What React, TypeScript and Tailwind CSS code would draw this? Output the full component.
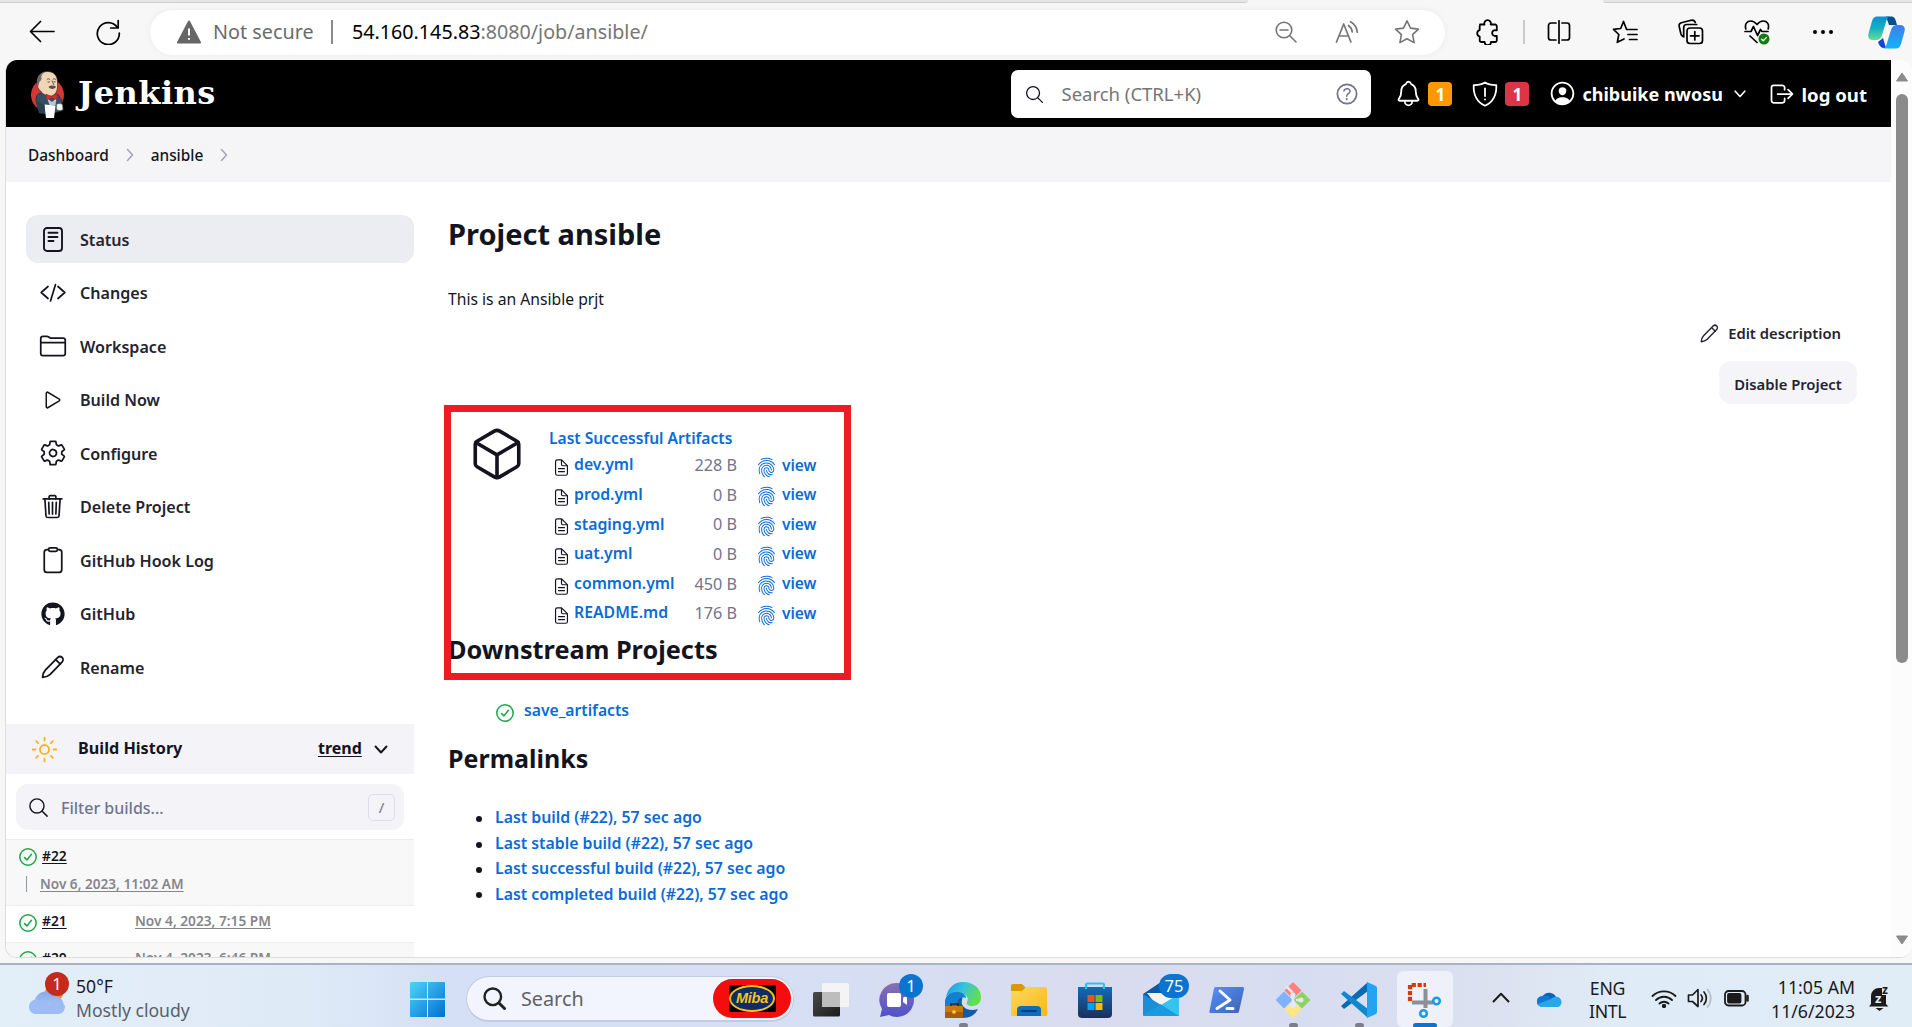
import type { ReactNode } from "react";
import {
  IoSearchOutline, IoHelpCircleOutline, IoNotificationsOutline, IoPersonCircleOutline, IoLogOutOutline,
  IoFolderOutline, IoPlayOutline, IoSettingsOutline, IoTrashOutline, IoClipboardOutline,
  IoSunnyOutline, IoCubeOutline, IoDocumentTextOutline, IoFingerPrintOutline,
} from "react-icons/io5";
import { FaGithub } from "react-icons/fa";

const Line = ({ w, h, sw = 1.6, vb, children, className = "" }: { w: number; h: number; sw?: number; vb?: string; children: ReactNode; className?: string }) => (
  <svg width={w} height={h} viewBox={vb ?? `0 0 ${w} ${h}`} fill="none" stroke="currentColor" strokeWidth={sw} strokeLinecap="round" strokeLinejoin="round" className={`shrink-0 ${className}`}>
    {children}
  </svg>
);

const Pencil = ({ size }: { size: number }) => (
  <Line w={size} h={size} vb="0 0 24 24" sw={1.8}>
    <path d="M1.6 22.4C1.8 19 2.6 16.8 4.5 14.8L16.6 2.6c1.4-1.4 3.3-1.3 4.5-.1s1.3 3.2-.1 4.6L9.2 19.3C7.2 21.2 5 22.1 1.6 22.4Z" />
    <path d="M14.8 4.6l4.500 4.500" />
  </Line>
);

const Ok = () => (
  <Line w={18} h={18} sw={1.5} className="text-[#1ea64b]">
    <circle cx="9" cy="9" r="8.2" />
    <path d="M5.600 9.600l2.300 2.300 4.600-5.600" />
  </Line>
);

const Chevron = ({ className = "" }: { className?: string }) => (
  <Line w={8} h={14} sw={1.5} className={className}><path d="M1.500 1.500L6.500 7l-5 5.500" /></Line>
);

function Toolbar() {
  return (
    <div className="shrink-0 bg-[#f7f7f7]">
      <div className="flex h-[3px] justify-between">
        <div className="w-[1248px] rounded-br border-b border-[#cfcfcf] bg-[#e6e6e6]" />
        <div className="w-[309px] rounded-bl border-b border-[#cfcfcf] bg-[#e6e6e6]" />
      </div>
      <div className="flex h-[57px] items-center pb-[1px] pt-[2px] text-black">
        <Line w={26} h={24} sw={1.7} className="ml-[29px]"><path d="M25 11.500H1.500M11.500 1.500l-10 10 10 10" /></Line>
        <Line w={26} h={26} sw={1.7} className="ml-[40px]"><path d="M22.500 8.500A11 11 0 1 0 24.300 14M23.200 1.500v7.500h-7.500" /></Line>
        <div className="ml-[29px] mt-[1px] flex h-[45px] w-[1295px] items-center rounded-full bg-white pb-[2px] pl-[26px] shadow-[0_0_6px_rgba(0,0,0,0.06)]">
          <svg width="26" height="24" viewBox="0 0 26 24" className="shrink-0"><path d="M13 1.500L24 22.500H2z" fill="#666" stroke="#666" strokeWidth="2" strokeLinejoin="round" /><path d="M13 8.500v7M13 18v1.800" stroke="#fff" strokeWidth="2" /></svg>
          <span className="ml-[11px] w-[118px] text-[19.8px] text-[#6b6b6b]">Not secure</span>
          <span className="h-[24px] w-[2px] bg-[#8c8c8c]" />
          <span className="ml-[19px] flex-1 whitespace-nowrap text-[19.7px] text-[#767676]"><span className="text-black">54.160.145.83</span>:8080/job/ansible/</span>
          <div className="flex items-center pr-[25px] text-[#757575]">
            <Line w={22} h={22} sw={1.6}><circle cx="9" cy="9" r="7.8" /><path d="M5 9h8M14.800 14.800l6.200 6.200" /></Line>
            <Line w={24} h={24} sw={1.7} className="ml-[38px]"><path d="M1.500 22L8.700 4l7.200 18M4 16h9.500M13.500 5.500a9 9 0 0 1 3.700 6.500M15.500 1.800a13 13 0 0 1 6.700 10.500" /></Line>
            <Line w={26} h={26} sw={1.6} className="ml-[35px]"><path d="M13 1.800l3.500 7.300 7.900 1-5.800 5.500 1.500 8-7.100-3.900-7.100 3.900 1.500-8L1.600 10.100l7.900-1z" /></Line>
          </div>
        </div>
        <Line w={24} h={26} sw={1.8} className="ml-[30px]"><path d="M5 5.500h4.500a3.300 3.300 0 1 1 6.200 0H20a1.800 1.800 0 0 1 1.800 1.800v4h-1a2.900 2.900 0 1 0 0 5.600h1v4.400A1.800 1.800 0 0 1 20 23h-4a3.200 3.200 0 0 1-6.400 0H6.500a1.800 1.800 0 0 1-1.800-1.800v-3.700a3.300 3.300 0 0 1 0-6.400V7" /></Line>
        <span className="ml-[24px] h-[24px] w-[2px] bg-[#c9c9c9]" />
        <Line w={24} h={24} sw={1.7} className="ml-[22px]"><path d="M9 3H4a2.500 2.500 0 0 0-2.500 2.500v12A2.500 2.500 0 0 0 4 20h5M12 .8v22.400M15 3h5a2.500 2.500 0 0 1 2.500 2.500v12A2.500 2.500 0 0 1 20 20h-5" /></Line>
        <Line w={26} h={24} sw={1.7} className="ml-[41px]"><path d="M16 9.500l-1.500-.2L11.500 1.500 8.700 8.500l-7.200.8 5.300 5.200-1.500 7.800L12 19M17 9.500h8M16 14.500h9M17.500 19.500h7.500" /></Line>
        <Line w={26} h={26} sw={1.7} className="ml-[40px]"><rect x="9" y="9" width="15.5" height="15.5" rx="3" /><path d="M16.800 12.500v8.500M12.500 16.800H21M5 17.500C3.800 17 3.200 16 2.800 14.500L1.200 7.500c-.4-2 .4-3.200 2.200-3.700L13 1.300c2.300-.5 3.700.4 4.300 2.200M5.700 18V8.500c0-2 1-3 3-3h10" /></Line>
        <svg width="26" height="26" viewBox="0 0 26 26" fill="none" stroke="#000" strokeWidth="1.7" strokeLinecap="round" strokeLinejoin="round" className="ml-[40px] shrink-0"><path d="M1.800 10C.5 5 3 2 6.800 2c2.700 0 4.600 1.500 6.200 3.500C14.600 3.500 16.500 2 19.200 2 23 2 25.500 5 24.200 10M1 12.500h6l2.500-5 4 9 3-6 1.500 2h6M6 17l7 6.500" /><circle cx="20" cy="20" r="5.5" fill="#107c10" stroke="none" /><path d="M17.600 20.200l1.700 1.600 3-3.200" stroke="#fff" strokeWidth="1.3" /></svg>
        <span className="ml-[43px] flex gap-[4px]"><i className="size-[4px] rounded-full bg-black" /><i className="size-[4px] rounded-full bg-black" /><i className="size-[4px] rounded-full bg-black" /></span>
        <svg width="37" height="33" viewBox="0 0 37 33" className="ml-[35px] shrink-0">
          <defs>
            <linearGradient id="cpa" x1="0" y1="0" x2="0" y2="1"><stop offset="0" stopColor="#0d8fd0" /><stop offset=".5" stopColor="#14b1c4" /><stop offset="1" stopColor="#67dd92" /></linearGradient>
            <linearGradient id="cpb" x1="0" y1="0" x2="0" y2="1"><stop offset="0" stopColor="#3f7fe8" /><stop offset="1" stopColor="#12b2ff" /></linearGradient>
          </defs>
          <path d="M18 .5h5c3 0 4 1.500 5 5l1 3.500h-8z" fill="#0b4f8a" />
          <path d="M10 26l5-4 3 10h-2c-3 0-4.500-2-6-6z" fill="#1743d6" />
          <path d="M9 .5h14c-3 0-4 2-5 5.500l-4 13c-1 3.500-3 5-6 5H5c-4 0-5.500-2.500-4.500-6.500L4 5C5 2 6.500.5 9 .5z" fill="url(#cpa)" />
          <path d="M28 32.500H14c3 0 4-2 5-5.500l4-13c1-3.500 3-5 6-5h3c4 0 5.500 2.500 4.500 6.500L33 28c-1 3-2.500 4.500-5 4.500z" fill="url(#cpb)" />
        </svg>
      </div>
    </div>
  );
}

function Butler() {
  return (
    <svg width="37" height="50" viewBox="0 0 37 50" className="shrink-0">
      <ellipse cx="18.5" cy="26" rx="16.5" ry="16.5" fill="#d33833" />
      <path d="M11 24c-3 1-4.500 4-4 8l3 12 9 1.500 15-4-1-10-4-6-7-2z" fill="#335061" stroke="#1b2a33" strokeWidth=".6" />
      <path d="M8 14C8 6 13 2.500 18.500 2.500c6.500 0 10 4 10 11C29 20 28 25 23 27c-5 .8-9-1.500-11.500-5C9 20 8 17 8 14z" fill="#f0d6b7" stroke="#2c2624" strokeWidth=".7" />
      <path d="M9 18C6.500 12 8.500 4 17 2.500c-4 2-5 4-4.500 7 .2 2-2 2-2.500 5z" fill="#6d6b6d" />
      <path d="M18 10.500c.8-1 2-1 2.800 0M24 10.300c.7-.8 1.800-.8 2.500 0M23 12l1.800 3.500M19 13h1.500M25 12.800h1.300" stroke="#3a2c28" strokeWidth=".8" fill="none" strokeLinecap="round" />
      <path d="M19.500 18c2-1.800 5.500-1.800 7.500-.2-1 2.500-5.500 3-7.500.2z" fill="#57504f" />
      <path d="M18 29l5 4 4.500-4-1 7h-6z" fill="#b7c7d8" />
      <path d="M17 25l5.500 2.500 5.500-3v6l-5.500-1.500-5 2z" fill="#e02b2b" stroke="#81272b" strokeWidth=".5" />
      <path d="M15.500 35.500l11 1-1.500 12.500h-8z" fill="#fff" />
      <path d="M8 32l7.500 4v8l-5-1z" fill="#29404e" />
      <path d="M27.500 35.500c2-1.500 5-1.500 6 .5l.5 4.500c-2.500 1.500-5 1.500-6.500-.5z" fill="#f1f1f1" stroke="#555" strokeWidth=".6" />
    </svg>
  );
}

const Badge = ({ className, children }: { className: string; children: ReactNode }) => (
  <span className={`flex h-[24px] w-[24px] items-center justify-center rounded-[4px] pt-[1px] text-[17px] font-bold ${className}`}>{children}</span>
);

function Header() {
  return (
    <header className="flex h-[67px] shrink-0 items-center bg-black pl-[23px] text-white">
      <Butler />
      <span className="ml-[12px] -mt-[2px] flex-1 font-['DejaVu_Serif'] text-[32px] font-bold tracking-[0.5px]">Jenkins</span>
      <div className="mt-[1px] flex h-[48px] w-[360px] items-center rounded-[7px] bg-white pl-[13px] text-[#14141f]">
        <IoSearchOutline size={21} />
        <span className="ml-[16px] flex-1 text-[18.5px] text-[#757575]">Search (CTRL+K)</span>
        <IoHelpCircleOutline size={28} className="mr-[10px] text-[#73738c]" />
      </div>
      <IoNotificationsOutline size={29} className="ml-[23px] shrink-0" />
      <Badge className="ml-[5px] mt-[1px] bg-[#ff9800]">1</Badge>
      <Line w={26} h={26} sw={1.8} className="ml-[20px]"><path d="M13 1.500c3 2 7 2.700 11.300 2.600.5 11-3.300 17-11.300 20.700C5 21.100 1.200 15.100 1.700 4.100 6 4.200 10 3.500 13 1.500zM13 7.500v7.500M13 18.300v.2" /></Line>
      <Badge className="ml-[7px] mt-[1px] bg-[#dc3545]">1</Badge>
      <IoPersonCircleOutline size={29} className="ml-[19px] shrink-0" />
      <span className="ml-[5px] mt-[2px] w-[152px] whitespace-nowrap text-[18px] font-bold">chibuike nwosu</span>
      <Line w={12} h={8} sw={1.6}><path d="M1.200 1.200L6 6.500l4.800-5.300" /></Line>
      <IoLogOutOutline size={28} className="ml-[22px] shrink-0" />
      <span className="ml-[5px] mr-[24px] mt-[2px] whitespace-nowrap text-[18.6px] font-bold">log out</span>
    </header>
  );
}

const tasks: [string, ReactNode][] = [
  ["Status", <Line w={20} h={25} sw={1.9}><rect x="1" y="1" width="18" height="23" rx="3" /><path d="M5.500 5.800h9M5.500 10h9M5.500 14h5" /></Line>],
  ["Changes", <Line w={26} h={20} sw={1.7}><path d="M8 3.500L1.200 9.500 8 15.500M18 3.500l6.800 6-6.800 6M15.500 1.500l-5 16.500" /></Line>],
  ["Workspace", <IoFolderOutline size={28} />],
  ["Build Now", <IoPlayOutline size={24} />],
  ["Configure", <IoSettingsOutline size={28} />],
  ["Delete Project", <IoTrashOutline size={27} />],
  ["GitHub Hook Log", <IoClipboardOutline size={28} />],
  ["GitHub", <FaGithub size={24} />],
  ["Rename", <Pencil size={24} />],
];

function Sidebar() {
  return (
    <aside className="w-[408px] shrink-0 text-[#14141f]">
      <nav className="flex flex-col gap-[5.5px] pt-[33px]">
        {tasks.map(([label, icon], i) => (
          <div key={label} className={`ml-[20px] flex h-[48px] items-center rounded-xl pl-[12px] ${i === 0 ? "bg-[#ecedf3]" : ""}`}>
            <span className="mr-[13px] flex w-[29px] justify-center">{icon}</span>
            <span className="mt-[2px] text-[16.1px] font-semibold text-[#24242f]">{label}</span>
          </div>
        ))}
      </nav>
      <div className="mt-[33px] flex h-[50px] items-center bg-[#f3f3f8] pl-[24px]">
        <IoSunnyOutline size={29} className="text-[#ffb01f]" />
        <span className="-mt-[2px] ml-[19px] w-[240px] text-[16.2px] font-bold">Build History</span>
        <span className="-mt-[2px] text-[16px] font-bold underline underline-offset-2">trend</span>
        <Line w={14} h={9} sw={1.9} className="ml-[12px]"><path d="M1.500 1.500L7 7.500l5.500-6" /></Line>
      </div>
      <div className="ml-[10px] mt-[10px] flex h-[46px] w-[388px] items-center rounded-xl bg-[#f3f3f8] pl-[11px]">
        <IoSearchOutline size={23} />
        <span className="ml-[11px] mt-[1px] flex-1 text-[16px] font-medium text-[#73738c]">Filter builds...</span>
        <span className="mr-[9px] flex size-[27px] items-center justify-center rounded-[5px] border border-[#dedee8] text-[15px] text-[#73738c]">/</span>
      </div>
      <div className="mt-[9px] h-[66px] border-t border-[#ececec] bg-[#f8f8f8] text-[13.8px] font-semibold">
        <div className="flex h-[34px] items-center pl-[13px]">
          <Ok /><span className="ml-[5px] -mt-[2px] underline underline-offset-2">#22</span>
        </div>
        <div className="flex h-[20px] items-center pl-[20px]">
          <span className="h-[16px] w-[1px] bg-[#8a98a5]" />
          <span className="ml-[13px] text-[13.6px] text-[#85858a] underline underline-offset-2">Nov 6, 2023, 11:02 AM</span>
        </div>
      </div>
      {[["#21", "Nov 4, 2023, 7:15 PM", "bg-white"], ["#20", "Nov 4, 2023, 6:46 PM", "bg-[#f8f8f8]"]].map(([n, d, bg]) => (
        <div key={n} className={`flex h-[37px] items-center border-t border-[#ececec] pl-[13px] text-[13.8px] font-semibold ${bg}`}>
          <span className="-mt-[2px]"><Ok /></span><span className="ml-[5px] -mt-[6px] w-[93px] underline underline-offset-2">{n}</span>
          <span className="-mt-[6px] text-[13.7px] text-[#85858a] underline underline-offset-2">{d}</span>
        </div>
      ))}
    </aside>
  );
}

const files = [["dev.yml", "228 B"], ["prod.yml", "0 B"], ["staging.yml", "0 B"], ["uat.yml", "0 B"], ["common.yml", "450 B"], ["README.md", "176 B"]];
const links = ["Last build", "Last stable build", "Last successful build", "Last completed build"];

function Main() {
  return (
    <main className="flex-1 pl-[34px] text-[#14141f]">
      <h1 className="mt-[32px] h-[40px] text-[29px] font-bold leading-[40px]">Project ansible</h1>
      <p className="mt-[33px] h-[24px] text-[15.7px] leading-6">This is an Ansible prjt</p>
      <div className="mt-[10px] flex h-[24px] items-center justify-end gap-[9px] pr-[50px] text-[14.8px] font-semibold text-[#24242f]">
        <Pencil size={19} />Edit description
      </div>
      <div className="mt-[16px] flex justify-end pr-[34px]">
        <button className="h-[43px] w-[138px] rounded-xl bg-[#f5f5f9] pt-[3px] text-[14.8px] font-semibold text-[#24242f]">Disable Project</button>
      </div>
      <div className="relative mt-[22px]">
        <div className="flex">
          <IoCubeOutline size={58} className="ml-[20px] -mt-[1px] shrink-0" />
          <div className="ml-[23px]">
            <div className="h-[24px] text-[15.6px] font-semibold leading-6 text-[#0b6bd6]">Last Successful Artifacts</div>
            {files.map(([f, s]) => (
              <div key={f} className="flex h-[29.6px] items-center text-[15.8px] font-semibold text-[#0b6bd6]">
                <IoDocumentTextOutline size={19} className="ml-[3px] mt-[6px] text-[#14141f]" />
                <span className="ml-[3px] mt-[1px] w-[99px]">{f}</span>
                <span className="mt-[1px] w-[64px] text-right text-[16.2px] font-normal text-[#73738c]">{s}</span>
                <IoFingerPrintOutline size={21} className="ml-[19px] mt-[5px]" />
                <span className="ml-[5px] mt-[1px] text-[15.5px]">view</span>
              </div>
            ))}
          </div>
        </div>
        <h2 className="mt-[3px] h-[36px] text-[25.3px] font-bold leading-9">Downstream Projects</h2>
        <div className="absolute -left-[4px] -top-[21px] h-[275px] w-[407px] border-[7px] border-[#ed1c24]" />
      </div>
      <div className="mt-[32px] flex h-[24px] items-center pl-[48px] text-[15.8px] font-semibold text-[#0b6bd6]">
        <span className="mt-[5px]"><Ok /></span><span className="ml-[10px] mt-[1px] text-[15.7px]">save_artifacts</span>
      </div>
      <h2 className="mt-[17px] h-[36px] text-[25px] font-bold leading-9">Permalinks</h2>
      <ul className="mt-[30px]">
        {links.map((l) => (
          <li key={l} className="flex h-[25.4px] items-center pl-[28px] text-[15.85px] font-semibold text-[#0b6bd6]">
            <i className="mt-[2px] size-[6px] rounded-full bg-[#14141f]" /><span className="ml-[13px]">{l} (#22), 57 sec ago</span>
          </li>
        ))}
      </ul>
    </main>
  );
}

function Scrollbar() {
  return (
    <div className="flex w-[21px] flex-col items-center bg-[#fcfcfc] pb-[12px] pt-[12px]">
      <svg width="14" height="10" viewBox="0 0 14 10"><path d="M7 1l5.500 8H1.500z" fill="#8b8b8b" stroke="#8b8b8b" strokeLinejoin="round" /></svg>
      <div className="mt-[12px] h-[569px] w-[12px] rounded-full bg-[#8b8b8b]" />
      <svg width="14" height="10" viewBox="0 0 14 10" className="mt-auto"><path d="M7 9l5.500-8H1.500z" fill="#8b8b8b" stroke="#8b8b8b" strokeLinejoin="round" /></svg>
    </div>
  );
}

const apps: { id: string; art: ReactNode; badge?: string; mark?: "dot" | "active" }[] = [
  { id: "taskview", art: <><defs><linearGradient id="tv" x1="0" y1="0" x2="1" y2="1"><stop offset="0" stopColor="#4a4a4a" /><stop offset="1" stopColor="#1c1c1c" /></linearGradient></defs><rect x="0" y="10" width="27" height="24.5" rx="1.5" fill="url(#tv)" /><rect x="9" y="1" width="27" height="24" rx="1.5" fill="#f4f4f4" /><rect x="9" y="10" width="18" height="15" fill="#bdbdbd" /></> },
  { id: "chat", badge: "1", art: <><defs><linearGradient id="ch" x1="0" y1="0" x2="0" y2="1"><stop offset="0" stopColor="#8a6fae" /><stop offset="1" stopColor="#4f52cc" /></linearGradient></defs><path d="M18 1a17 17 0 1 1-8 32L1 35l2-8A17 17 0 0 1 18 1z" fill="url(#ch)" /><rect x="8" y="11" width="14" height="14" rx="2" fill="#fff" /><path d="M24 16l4-3v10l-4-3z" fill="#fff" /></> },
  { id: "edge", mark: "dot", art: <><defs><linearGradient id="eg" x1="0" y1="0" x2="1" y2=".4"><stop offset="0" stopColor="#1c98dd" /><stop offset=".5" stopColor="#35c1e0" /><stop offset="1" stopColor="#62e04c" /></linearGradient></defs><path d="M0 21c0-8 7-12 13-11 5 1 5 5 4 8-2 7 6 12 16 9-3 6-8 9-15 9C8 36 0 30 0 21z" fill="#0f5cae" /><path d="M1 15C3 6 9 0 18 0c11 0 18 7 18 15 0 6-4 9-9 9-4 0-6-2-5-4 2-3 0-8-6-9-6-1.500-11 0-15 4z" fill="url(#eg)" /><path d="M0 22C0 14 6 9.500 13 10c5 .5 8 3 8 6-5-2.500-9 1-9 8H0z" fill="#147fd0" /><path d="M6 24v-2h7v2" fill="none" stroke="#3a2206" strokeWidth="1.5" /><rect x="0" y="24" width="18" height="12" rx="1" fill="#c87a0c" /><rect x="0" y="30" width="18" height="6" fill="#a85c06" /><rect x="7.5" y="28.5" width="3" height="3" fill="#ffd94a" /></> },
  { id: "files", art: <><defs><linearGradient id="fo" x1="0" y1="0" x2="1" y2="1"><stop offset="0" stopColor="#ffd95c" /><stop offset="1" stopColor="#f8b61c" /></linearGradient></defs><path d="M0 4a2 2 0 0 1 2-2h9l4 4h18v8H0z" fill="#d99a06" /><path d="M0 9h11l4-4h19a2 2 0 0 1 2 2v27H0z" fill="url(#fo)" /><path d="M6 34v-6a4 4 0 0 1 4-4h16a4 4 0 0 1 4 4v6z" fill="#0f6cbd" /><path d="M11 29h14" stroke="#083f7a" strokeWidth="1.8" strokeLinecap="round" /></> },
  { id: "store", art: <><defs><linearGradient id="st" x1="0" y1="0" x2="0" y2="1"><stop offset="0" stopColor="#0f6cbd" /><stop offset="1" stopColor="#1c2f59" /></linearGradient></defs><path d="M9 7V3a1.500 1.500 0 0 1 1.500-1.500h15A1.500 1.500 0 0 1 27 3v4" fill="none" stroke="#30c0f0" strokeWidth="2.2" /><path d="M1 5h34v27a4 4 0 0 1-4 4H5a4 4 0 0 1-4-4z" fill="url(#st)" /><path d="M9 7V4M27 7V4" stroke="#30c0f0" strokeWidth="2.2" /><path d="M10.500 13h7v7h-7z" fill="#f25022" /><path d="M18.500 13h7v7h-7z" fill="#7fba00" /><path d="M10.500 21h7v7h-7z" fill="#00a4ef" /><path d="M18.500 21h7v7h-7z" fill="#ffb900" /></> },
  { id: "mail", badge: "75", art: <><path d="M0 12L18 0l18 12v8H0z" fill="#0c59a4" /><path d="M4 11h28v12l-14 6z" fill="#f3f3f3" /><path d="M0 12l18 11-18 11z" fill="#1a8fd8" /><path d="M36 12L0 34h36z" fill="#35c3f0" /><path d="M0 34l17-12 19 12z" fill="#1c9ae0" /></> },
  { id: "powershell", art: <><defs><linearGradient id="ps" x1="0" y1="0" x2="1" y2="1"><stop offset="0" stopColor="#5391fe" /><stop offset="1" stopColor="#3e62ad" /></linearGradient></defs><path d="M6.500 5h27a1.500 1.500 0 0 1 1.500 2l-5 22.500a2 2 0 0 1-2 1.500H2a1.500 1.500 0 0 1-1.500-2l4.500-22.500A2 2 0 0 1 6.500 5z" fill="url(#ps)" /><path d="M11 9l10 9-13 8.500M18 26.500h6" fill="none" stroke="#fff" strokeWidth="3" strokeLinecap="round" strokeLinejoin="round" /></> },
  { id: "git", mark: "dot", art: <><path d="M18 0l8.500 8.500-8.500 8.500-8.500-8.500z" fill="#ff8080" /><path d="M9 9.500l8.500 8.500L9 26.500.5 18z" fill="#80b3ff" /><path d="M27 9.500l8.500 8.500-8.500 8.500-8.500-8.500z" fill="#8cd35f" /><path d="M18 19l8.500 8.500L18 36l-8.500-8.500z" fill="#ffe680" /><path d="M12 5l5 5v5M18 16v5M22 18h4" stroke="#e6e8f4" strokeWidth="2.5" fill="none" strokeLinecap="round" /><circle cx="18" cy="13" r="2.5" fill="#e6e8f4" /><circle cx="18" cy="23" r="3" fill="#e6e8f4" /><circle cx="26" cy="18" r="2.5" fill="#e6e8f4" /></> },
  { id: "code", mark: "dot", art: <><path d="M0 24l3 3L27 9V0z" fill="#0a6ab0" /><path d="M0 12l3-3 24 18v9z" fill="#1088cf" /><path d="M26 0l8 3.500a3 3 0 0 1 2 2.500v24a3 3 0 0 1-2 2.500L26 36z" fill="#24a4f0" /></> },
  { id: "snip", mark: "active", art: <><path d="M3 19V3h16" fill="none" stroke="#d83b01" strokeWidth="4.2" strokeDasharray="4.2 1.7" /><path d="M5 20.500h21M18.500 7v19" stroke="#8a9097" strokeWidth="4" /><circle cx="29.5" cy="19" r="3.3" fill="none" stroke="#1a9be6" strokeWidth="2.6" /><circle cx="16.5" cy="31.5" r="3.3" fill="none" stroke="#1a9be6" strokeWidth="2.6" /></> },
];

function Taskbar() {
  return (
    <div className="flex h-[64px] shrink-0 overflow-hidden border-t-2 border-[#abb3c0] bg-[linear-gradient(90deg,#e2eef8_0%,#dfeaf7_16%,#d5e0f6_23%,#d6def3_45%,#d9dcee_58%,#d7ddf0_68%,#dce1f0_78%,#dfebf6_84%,#e0edf7_100%)] text-[#1b1b1b]">
      <div className="flex w-[410px] pl-[28px] pt-[4px]">
        <div className="relative h-[48px] w-[38px]">
          <svg width="38" height="48" viewBox="0 0 38 48">
            <defs><linearGradient id="wc" x1="0" y1="0" x2="0" y2="1"><stop offset="0" stopColor="#86a9ea" /><stop offset="1" stopColor="#bcd3fa" /></linearGradient></defs>
            <circle cx="26" cy="24" r="9" fill="#f08a1c" />
            <path d="M8 45a7.500 7.500 0 0 1-1-14.500A12 12 0 0 1 28 27a9.500 9.500 0 0 1 2 18z" fill="url(#wc)" />
            <path d="M1 38a7 7 0 0 1 12-5c3-2 7 0 8 4a9 9 0 0 1 16 0c0 5-3 8-7 8H8c-4 0-7-3-7-7z" fill="#9cbcf3" />
          </svg>
          <span className="absolute left-[17px] top-[3px] flex size-[24px] items-center justify-center rounded-full bg-[#c42b1c] text-[16.5px] text-white">1</span>
        </div>
        <div className="ml-[10px] mt-[5px] text-[17.6px] leading-6">
          <div>50°F</div>
          <div className="text-[#5a5f66]">Mostly cloudy</div>
        </div>
      </div>
      <svg width="35" height="35" viewBox="0 0 35 35" className="mt-[17px] shrink-0">
        <defs><linearGradient id="wn" x1="0" y1="0" x2="1" y2="1"><stop offset="0" stopColor="#4fd3fb" /><stop offset="1" stopColor="#0070d0" /></linearGradient></defs>
        <path d="M1 0h16v16.500H0V1a1 1 0 0 1 1-1zM18 0h16a1 1 0 0 1 1 1v15.500H18zM0 18h17v17H1a1 1 0 0 1-1-1zM18 18h17v16a1 1 0 0 1-1 1H18z" fill="url(#wn)" />
      </svg>
      <div className="ml-[21px] mt-[11px] flex h-[46px] w-[328px] items-center rounded-full border border-b-2 border-[#c2cce0] bg-[#f2f5fd] pl-[16px]">
        <Line w={23} h={23} sw={2.4} className="text-[#222]"><circle cx="9.8" cy="9.8" r="8.3" /><path d="M16 16l5.500 5.500" strokeWidth="3" /></Line>
        <span className="ml-[15px] mt-[1px] flex-1 text-[19.8px] text-[#5f6166]">Search</span>
        <span className="mr-[2px] flex h-[39px] w-[78px] items-center justify-center rounded-full bg-[#f40d0d]">
          <span className="flex h-[27px] w-[47px] items-center justify-center bg-black">
            <span className="flex h-[27px] w-[46px] items-center justify-center rounded-[50%] border-[2.5px] border-[#f7c21b] bg-[#0c2c6a] font-['Liberation_Sans'] text-[14.5px] font-bold italic tracking-[-0.2px] text-[#f7c21b]">Miba</span>
          </span>
        </span>
      </div>
      <div className="ml-[4px] flex">
        {apps.map((a) => (
          <div key={a.id} className="flex w-[66px] justify-center pt-[6px]">
            <div className={`relative h-[56px] w-[56px] ${a.mark === "active" ? "rounded-md bg-[#eef1fa]" : ""}`}>
              <svg width="36" height="36" viewBox="0 0 36 36" className="ml-[10px] mt-[10.5px]">{a.art}</svg>
              {a.badge && <span className={`absolute top-[3px] flex h-[24px] items-center justify-center rounded-full bg-[#0a74d1] text-[16.5px] text-white ${a.badge.length > 1 ? "left-[26px] w-[30px]" : "left-[30px] w-[24px]"}`}>{a.badge}</span>}
              {a.mark === "dot" && <span className="absolute left-[24px] top-[52px] h-[5px] w-[9px] rounded-full bg-[#7c7f8b]" />}
              {a.mark === "active" && <span className="absolute left-[16px] top-[52px] h-[5px] w-[24px] rounded-full bg-[#0a74d1]" />}
            </div>
          </div>
        ))}
      </div>
      <div className="ml-[34px] flex flex-1 items-center pt-[4px]">
        <Line w={18} h={11} sw={2} className="-mt-[1px]"><path d="M1.500 9.500L9 1.800l7.500 7.700" /></Line>
        <svg width="25" height="17" viewBox="0 0 25 17" className="ml-[27px] mt-[2px] shrink-0"><path d="M6 5a7.500 7.500 0 0 1 13 1l-7 5z" fill="#0364b8" /><path d="M5.500 16A5.500 5.500 0 0 1 5 5c5-1.500 8 1 10 4z" fill="#0f78d4" /><path d="M14 8c2-3 10-4 10.500 3 0 3-2 5-4.500 5H5.500c-2 0-3.500-1-4.500-3z" fill="#28a8ea" /></svg>
        <div className="ml-[27px] mt-[4px] w-[37px] text-center text-[17.7px] leading-[23px] tracking-[-0.3px]">ENG<br />INTL</div>
        <Line w={26} h={19} sw={1.9} className="ml-[25px]"><path d="M1.500 7a16.500 16.500 0 0 1 23 0M5 11a11.500 11.500 0 0 1 16 0M8.500 14.500a6.500 6.500 0 0 1 9 0" /><circle cx="13" cy="17" r="1.2" fill="currentColor" /></Line>
        <Line w={26} h={20} sw={1.7} className="ml-[10px]"><path d="M1.500 7v6.500h4L11 18.500v-17L5.500 7zM14 7a5 5 0 0 1 0 6.500M17 4a9.500 9.500 0 0 1 0 12.500" /><path d="M20.500 1.500a13.500 13.500 0 0 1 0 17.500" stroke="#b5bdc8" /></Line>
        <Line w={26} h={17} sw={1.8} className="ml-[11px]"><rect x="1" y="1" width="20.5" height="14.5" rx="3.5" /><rect x="4" y="4" width="12.5" height="8.5" rx="1" fill="currentColor" /><path d="M23.500 6v4.500" strokeWidth="2.5" /></Line>
        <div className="ml-auto mt-[2px] text-right text-[17.7px] leading-6"><div>11:05 AM</div><div>11/6/2023</div></div>
        <div className="relative ml-[14px] mr-[22px] mt-[2px] h-[26px] w-[21px]">
          <svg width="21" height="26" viewBox="0 0 21 26"><path d="M2 18V10a8 8 0 0 1 8-8h7v16l2.500 2.500H0z" fill="#1b1b1b" /><path d="M6.500 22h8l-4 3z" fill="#1b1b1b" /></svg>
          <span className="absolute left-[6px] top-[5px] text-[13px] font-bold leading-[14px] text-[#e0edf7]">z</span>
          <span className="absolute left-[13px] top-0 h-[9px] bg-[#e0edf7] text-[12px] font-bold leading-[8px]">z</span>
        </div>
      </div>
    </div>
  );
}

export default function App() {
  return (
    <div className="flex h-[1027px] w-[1912px] flex-col overflow-hidden bg-[#f7f7f7] font-['Noto_Sans',sans-serif]">
      <Toolbar />
      <div className="ml-[5px] flex h-[898px] shrink-0 overflow-hidden rounded-[12px] border-b border-l border-[#dedede] bg-white">
        <div className="flex min-w-0 flex-1 flex-col">
          <Header />
          <div className="flex h-[55px] shrink-0 items-center bg-[#f5f5f8] pl-[22px] text-[15.4px] font-medium text-[#14141f]">
            <span className="mt-[2px]">Dashboard</span><Chevron className="ml-[17px] text-[#a3a3b8]" />
            <span className="ml-[17px] mt-[2px]">ansible</span><Chevron className="ml-[17px] text-[#a3a3b8]" />
          </div>
          <div className="flex h-[776px]">
            <Sidebar />
            <Main />
          </div>
        </div>
        <Scrollbar />
      </div>
      <div className="h-[5px] shrink-0" />
      <Taskbar />
    </div>
  );
}
